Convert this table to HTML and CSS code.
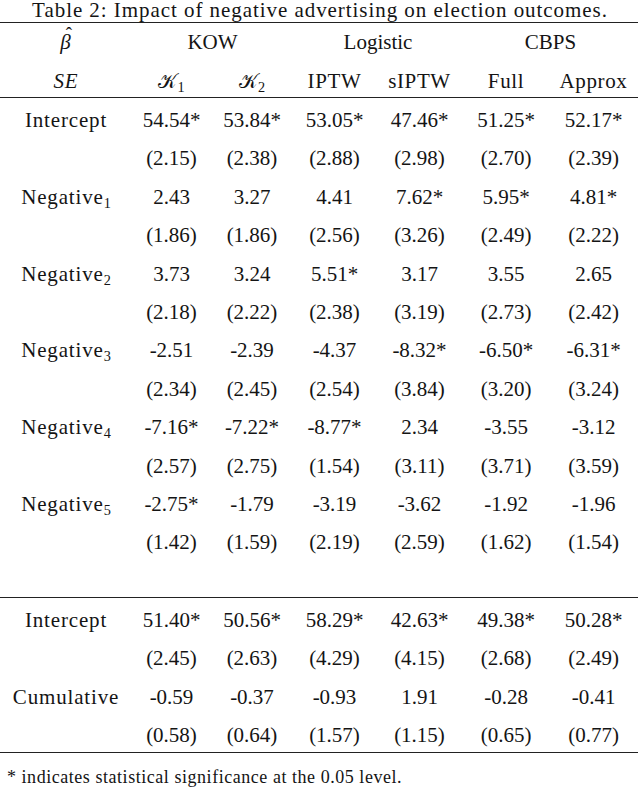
FILE: index.html
```html
<!DOCTYPE html>
<html lang="en">
<head>
<meta charset="utf-8">
<title>Table 2</title>
<link rel="stylesheet" href="styles.css">
</head>
<body>
<div class="page">
  <div class="caption">Table 2: Impact of negative advertising on election outcomes.</div>
  <table class="results">
    <colgroup>
      <col class="c-label"><col class="c-1"><col class="c-2"><col class="c-3"><col class="c-4"><col class="c-5"><col class="c-6">
    </colgroup>
    <thead>
      <tr class="head-top">
        <th class="label"><span class="math hatted">β</span></th>
        <th colspan="2">KOW</th>
        <th colspan="2">Logistic</th>
        <th colspan="2">CBPS</th>
      </tr>
      <tr class="head-bottom">
        <th class="label"><span class="math">SE</span></th>
        <th><span class="cal">𝒦</span><sub>1</sub></th>
        <th><span class="cal">𝒦</span><sub>2</sub></th>
        <th>IPTW</th>
        <th>sIPTW</th>
        <th>Full</th>
        <th>Approx</th>
      </tr>
    </thead>
    <tbody class="main">
      <tr><td class="label">Intercept</td><td>54.54*</td><td>53.84*</td><td>53.05*</td><td>47.46*</td><td>51.25*</td><td>52.17*</td></tr>
      <tr><td class="label"></td><td>(2.15)</td><td>(2.38)</td><td>(2.88)</td><td>(2.98)</td><td>(2.70)</td><td>(2.39)</td></tr>
      <tr><td class="label">Negative<sub>1</sub></td><td>2.43</td><td>3.27</td><td>4.41</td><td>7.62*</td><td>5.95*</td><td>4.81*</td></tr>
      <tr><td class="label"></td><td>(1.86)</td><td>(1.86)</td><td>(2.56)</td><td>(3.26)</td><td>(2.49)</td><td>(2.22)</td></tr>
      <tr><td class="label">Negative<sub>2</sub></td><td>3.73</td><td>3.24</td><td>5.51*</td><td>3.17</td><td>3.55</td><td>2.65</td></tr>
      <tr><td class="label"></td><td>(2.18)</td><td>(2.22)</td><td>(2.38)</td><td>(3.19)</td><td>(2.73)</td><td>(2.42)</td></tr>
      <tr><td class="label">Negative<sub>3</sub></td><td>-2.51</td><td>-2.39</td><td>-4.37</td><td>-8.32*</td><td>-6.50*</td><td>-6.31*</td></tr>
      <tr><td class="label"></td><td>(2.34)</td><td>(2.45)</td><td>(2.54)</td><td>(3.84)</td><td>(3.20)</td><td>(3.24)</td></tr>
      <tr><td class="label">Negative<sub>4</sub></td><td>-7.16*</td><td>-7.22*</td><td>-8.77*</td><td>2.34</td><td>-3.55</td><td>-3.12</td></tr>
      <tr><td class="label"></td><td>(2.57)</td><td>(2.75)</td><td>(1.54)</td><td>(3.11)</td><td>(3.71)</td><td>(3.59)</td></tr>
      <tr><td class="label">Negative<sub>5</sub></td><td>-2.75*</td><td>-1.79</td><td>-3.19</td><td>-3.62</td><td>-1.92</td><td>-1.96</td></tr>
      <tr><td class="label"></td><td>(1.42)</td><td>(1.59)</td><td>(2.19)</td><td>(2.59)</td><td>(1.62)</td><td>(1.54)</td></tr>
      <tr class="spacer"><td class="label">&nbsp;</td><td></td><td></td><td></td><td></td><td></td><td></td></tr>
    </tbody>
    <tbody class="cumulative">
      <tr><td class="label">Intercept</td><td>51.40*</td><td>50.56*</td><td>58.29*</td><td>42.63*</td><td>49.38*</td><td>50.28*</td></tr>
      <tr><td class="label"></td><td>(2.45)</td><td>(2.63)</td><td>(4.29)</td><td>(4.15)</td><td>(2.68)</td><td>(2.49)</td></tr>
      <tr><td class="label">Cumulative</td><td>-0.59</td><td>-0.37</td><td>-0.93</td><td>1.91</td><td>-0.28</td><td>-0.41</td></tr>
      <tr><td class="label"></td><td>(0.58)</td><td>(0.64)</td><td>(1.57)</td><td>(1.15)</td><td>(0.65)</td><td>(0.77)</td></tr>
    </tbody>
  </table>
  <div class="note">* indicates statistical significance at the 0.05 level.</div>
</div>
</body>
</html>
```

FILE: styles.css
```css
html, body {
  margin: 0;
  padding: 0;
  background: #ffffff;
}

body {
  font-family: "Liberation Serif", "Times New Roman", serif;
  color: #141414;
}

.page {
  width: 640px;
}

.caption {
  font-size: 21px;
  line-height: 16px;
  padding-top: 2px;
  margin-bottom: 4px;
  text-align: center;
  letter-spacing: 0.045em;
}

.results {
  width: 638px;
  border-collapse: collapse;
  table-layout: fixed;
  font-size: 21px;
}

.c-label { width: 132px; }
.c-1 { width: 79px; }
.c-2 { width: 82px; }
.c-3 { width: 83px; }
.c-4 { width: 87px; }
.c-5 { width: 86px; }
.c-6 { width: 89px; }

.results th,
.results td {
  padding: 10px 0 4.4px;
  line-height: 24px;
  text-align: center;
  font-weight: normal;
  white-space: nowrap;
}

.results .label {
  letter-spacing: 0.04em;
}

.head-top th {
  border-top: 1px solid #222;
  padding-top: 7px;
  padding-bottom: 5px;
}

.head-bottom th {
  border-bottom: 1px solid #222;
  padding-top: 10px;
  padding-bottom: 4px;
}

.head-bottom th:nth-child(n+4) {
  letter-spacing: 0.03em;
}

.cumulative tr:first-child td {
  border-top: 1px solid #222;
}

.cumulative tr:last-child td {
  border-bottom: 1px solid #222;
}

.math {
  font-style: italic;
}

.hatted {
  position: relative;
  display: inline-block;
}

.hatted::after {
  content: "\02C6";
  position: absolute;
  left: 0.28em;
  top: -0.42em;
  font-style: normal;
  font-size: 0.9em;
}

.cal {
  font-family: "DejaVu Sans", "Noto Sans", sans-serif;
  font-size: 0.95em;
}

sub {
  font-size: 0.68em;
  vertical-align: -0.28em;
  line-height: 0;
  letter-spacing: 0;
}

.note {
  font-size: 18px;
  line-height: 20px;
  margin-top: 14px;
  padding-left: 7px;
  letter-spacing: 0.03em;
}
```
